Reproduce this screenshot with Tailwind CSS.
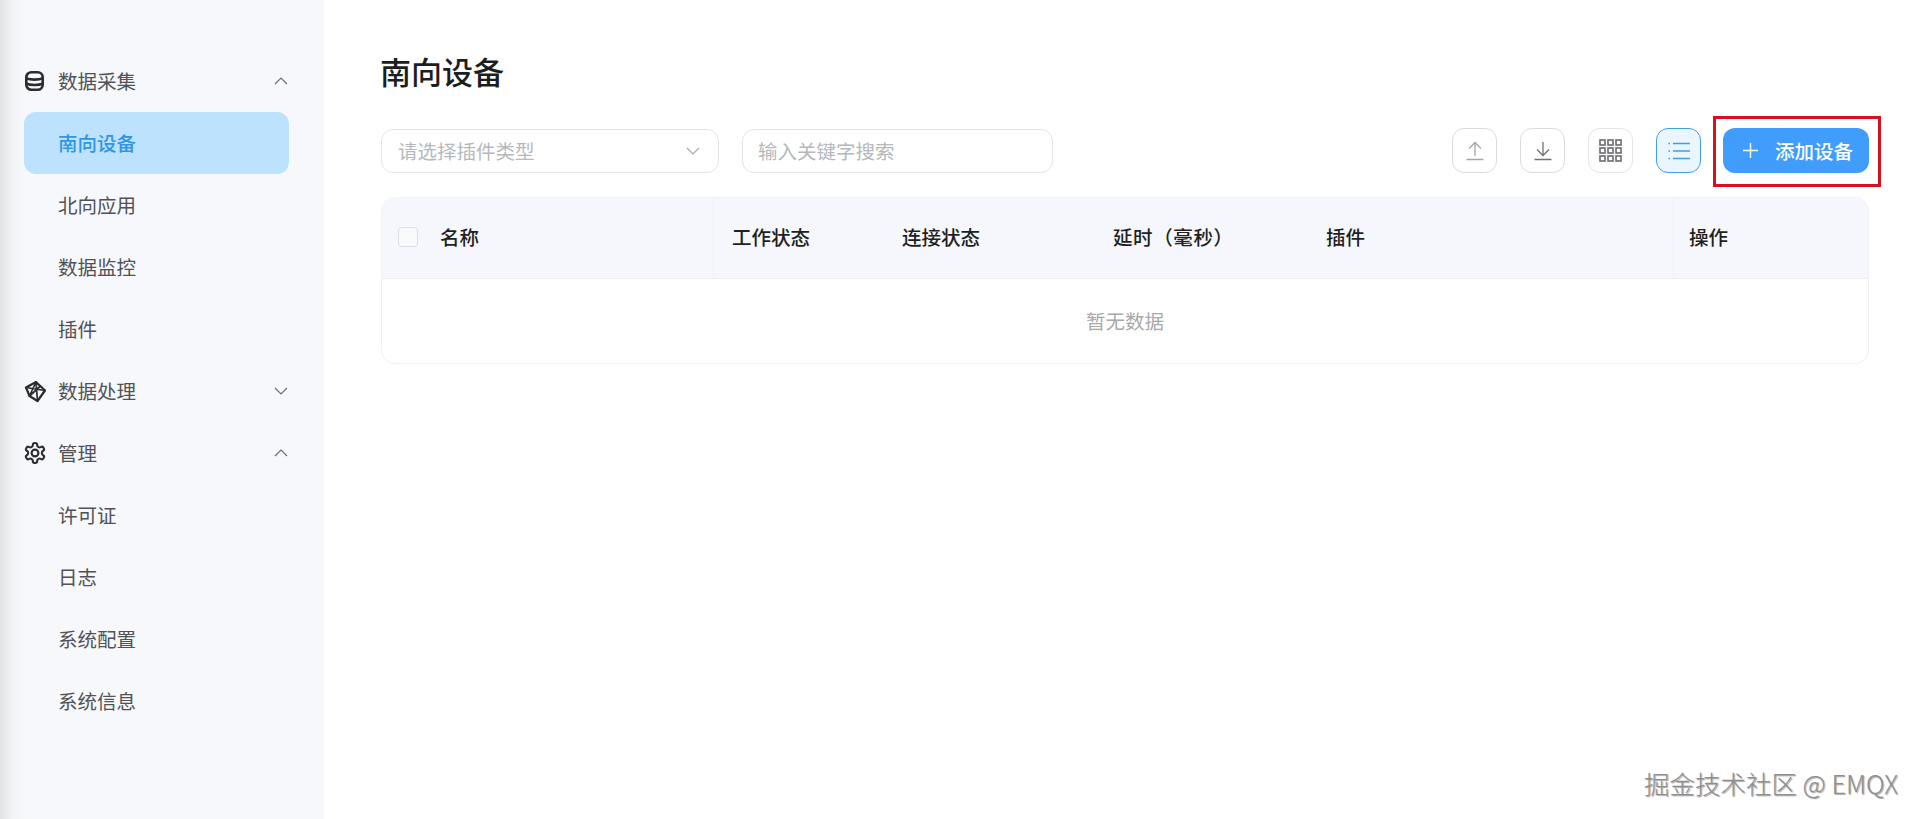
<!DOCTYPE html>
<html lang="zh">
<head>
<meta charset="utf-8">
<script src="https://cdn.jsdelivr.net/npm/@tailwindcss/browser@4"></script>
<title>南向设备</title>
</head>
<body class="bg-white">
<div class="relative flex h-[819px] w-[1920px] overflow-hidden bg-white font-['Noto_Sans_CJK_SC','Noto_Sans',sans-serif] text-[19.5px] text-[#505256]">
  <aside class="h-full w-[324px] shrink-0 bg-[linear-gradient(90deg,#e2e4e6,#f2f3f5_12px,#f7f8fb_26px)] pt-[50px]">
    <div class="flex h-[62px] items-center pl-[25px] pr-[36px]">
      <svg class="h-[20px] w-[19px]" viewBox="0 0 19 20" fill="none" stroke="#2b2c2f" stroke-width="2.6"><rect x="1.3" y="1.3" width="16.4" height="17.4" rx="5"/><path d="M1.3 7.4c4 1.6 12.4 1.6 16.4 0M1.3 12.8c4 1.6 12.4 1.6 16.4 0"/></svg>
      <span class="ml-[14px] flex-1">数据采集</span>
      <svg class="h-[8px] w-[14px]" viewBox="0 0 14 8" fill="none" stroke="#6b6d70" stroke-width="1.2"><path d="M1 7l6-6 6 6"/></svg>
    </div>
    <div class="flex h-[62px] items-center pl-[24px]">
      <div class="flex h-[62px] w-[265px] items-center rounded-[12px] bg-[#bde2fd] pl-[34px] font-medium text-[#2f95e8]">南向设备</div>
    </div>
    <div class="flex h-[62px] items-center pl-[58px]">北向应用</div>
    <div class="flex h-[62px] items-center pl-[58px]">数据监控</div>
    <div class="flex h-[62px] items-center pl-[58px]">插件</div>
    <div class="flex h-[62px] items-center pl-[24px] pr-[36px]">
      <svg class="h-[23px] w-[23px]" viewBox="0 0 23 23" fill="none" stroke="#2b2c2f" stroke-width="1.7" stroke-linejoin="round" stroke-linecap="round"><path d="M12 2L2 7.5l3.5 8.5 8 5 7.5-10.5z" stroke-width="2.2"/><path d="M12 2L5.5 16M12 2l1.5 19M2 7.5L21 10.500M5.500 16L16 6.500"/></svg>
      <span class="ml-[11px] flex-1">数据处理</span>
      <svg class="h-[8px] w-[14px]" viewBox="0 0 14 8" fill="none" stroke="#6b6d70" stroke-width="1.2"><path d="M1 1l6 6 6-6"/></svg>
    </div>
    <div class="flex h-[62px] items-center pl-[23px] pr-[36px]">
      <svg class="h-[24px] w-[24px]" viewBox="0 0 24 24" fill="none" stroke="#2b2c2f" stroke-width="2.1" stroke-linecap="round" stroke-linejoin="round"><path d="M12.22 2h-.44a2 2 0 0 0-2 2v.18a2 2 0 0 1-1 1.73l-.43.25a2 2 0 0 1-2 0l-.15-.08a2 2 0 0 0-2.73.73l-.22.38a2 2 0 0 0 .73 2.73l.15.1a2 2 0 0 1 1 1.72v.51a2 2 0 0 1-1 1.74l-.15.09a2 2 0 0 0-.73 2.73l.22.38a2 2 0 0 0 2.73.73l.15-.08a2 2 0 0 1 2 0l.43.25a2 2 0 0 1 1 1.73V20a2 2 0 0 0 2 2h.44a2 2 0 0 0 2-2v-.18a2 2 0 0 1 1-1.73l.43-.25a2 2 0 0 1 2 0l.15.08a2 2 0 0 0 2.73-.73l.22-.39a2 2 0 0 0-.73-2.73l-.15-.08a2 2 0 0 1-1-1.74v-.5a2 2 0 0 1 1-1.74l.15-.09a2 2 0 0 0 .73-2.73l-.22-.38a2 2 0 0 0-2.73-.73l-.15.08a2 2 0 0 1-2 0l-.43-.25a2 2 0 0 1-1-1.73V4a2 2 0 0 0-2-2z"/><circle cx="12" cy="12" r="3.4"/></svg>
      <span class="ml-[11px] flex-1">管理</span>
      <svg class="h-[8px] w-[14px]" viewBox="0 0 14 8" fill="none" stroke="#6b6d70" stroke-width="1.2"><path d="M1 7l6-6 6 6"/></svg>
    </div>
    <div class="flex h-[62px] items-center pl-[58px]">许可证</div>
    <div class="flex h-[62px] items-center pl-[58px]">日志</div>
    <div class="flex h-[62px] items-center pl-[58px]">系统配置</div>
    <div class="flex h-[62px] items-center pl-[58px]">系统信息</div>
  </aside>

  <main class="flex-1 pl-[56px] pr-[51px] pt-[49px]">
    <h1 class="h-[44px] text-[31px] leading-[44px] font-medium text-[#1d1e20]">南向设备</h1>
    <div class="mt-[35px] flex h-[45px] items-center pl-px">
      <div class="flex h-[44px] w-[338px] items-center justify-between rounded-[12px] border border-[#e2e4e7] pl-[16px] pr-[18px] text-[#b5b8bc]">
        <span>请选择插件类型</span>
        <svg class="h-[8px] w-[14px]" viewBox="0 0 14 8" fill="none" stroke="#a6a9ad" stroke-width="1.2"><path d="M1 1l6 6 6-6"/></svg>
      </div>
      <div class="ml-[23px] flex h-[44px] w-[311px] items-center rounded-[12px] border border-[#e2e4e7] pl-[15px] text-[#b5b8bc]">输入关键字搜索</div>
      <div class="ml-auto flex items-center gap-[23px]">
        <div class="flex h-[45px] w-[45px] items-center justify-center rounded-[12px] border border-[#d9dbde]">
          <svg class="h-[20px] w-[18px]" viewBox="0 0 18 20" fill="none" stroke="#a3a5a8" stroke-width="1.3"><path d="M9 15V1.5M3 7.5l6-6 6 6M.5 18.5h17"/></svg>
        </div>
        <div class="flex h-[45px] w-[45px] items-center justify-center rounded-[12px] border border-[#d9dbde]">
          <svg class="h-[20px] w-[18px]" viewBox="0 0 18 20" fill="none" stroke="#6f7174" stroke-width="1.3"><path d="M9 1v13.5M3 8.5l6 6 6-6M.5 18.5h17"/></svg>
        </div>
        <div class="flex h-[45px] w-[45px] items-center justify-center rounded-[12px] border border-[#e4e5e8]">
          <svg class="h-[23px] w-[23px]" viewBox="0 0 23 23" fill="none" stroke="#6a6c6f" stroke-width="1.6"><rect x="1" y="1" width="5" height="5"/><rect x="9" y="1" width="5" height="5"/><rect x="17" y="1" width="5" height="5"/><rect x="1" y="9" width="5" height="5"/><rect x="9" y="9" width="5" height="5"/><rect x="17" y="9" width="5" height="5"/><rect x="1" y="17" width="5" height="5"/><rect x="9" y="17" width="5" height="5"/><rect x="17" y="17" width="5" height="5"/></svg>
        </div>
        <div class="flex h-[45px] w-[45px] items-center justify-center rounded-[12px] border border-[#3f9fe6] bg-[#e9f5ff]">
          <svg class="h-[20px] w-[22px]" viewBox="0 0 22 20" fill="none" stroke="#3f9fe6" stroke-width="1.4"><path d="M5 2.5h17M5 10h17M5 17.5h17M.5 2.5h1.5M.5 10h1.5M.5 17.5h1.5"/></svg>
        </div>
      </div>
      <div class="relative ml-[22px] flex h-[45px] w-[146px] items-center rounded-[12px] bg-[#409dfb] pl-[20px] font-medium text-white">
        <svg class="h-[15px] w-[15px]" viewBox="0 0 15 15" fill="none" stroke="#fff" stroke-width="1.4"><path d="M7.5 0v15M0 7.5h15"/></svg>
        <span class="ml-[17px] whitespace-nowrap">添加设备</span>
        <div class="absolute -left-[10px] -top-[12px] h-[71px] w-[168px] border-[3px] border-[#d6101c]"></div>
      </div>
    </div>

    <div class="ml-px mt-[24px] h-[167px] w-[1488px] overflow-hidden rounded-[14px] border border-[#f0f1f4]">
      <div class="grid h-[81px] grid-cols-[332px_170px_172px_270px_347px_1fr] items-center border-b border-[#eceef2] bg-[#f5f7fc] pb-[2px] font-medium text-[#1e1f21]">
        <div class="flex h-full items-center border-r border-[#f0f2f7] pl-[16px]">
          <span class="h-[20px] w-[20px] rounded-[4px] border border-[#dcdee2] bg-[#f8f9fb]"></span>
          <span class="ml-[22px]">名称</span>
        </div>
        <div class="pl-[18px]">工作状态</div>
        <div class="pl-[18px]">连接状态</div>
        <div class="pl-[57px] whitespace-nowrap tracking-[0.6px]">延时（毫秒）</div>
        <div>插件</div>
        <div class="flex h-full items-center border-l border-[#f0f2f7] pl-[15px]">操作</div>
      </div>
      <div class="flex h-[84px] items-center justify-center text-[#a9a9a9]">暂无数据</div>
    </div>
  </main>

  <div class="absolute right-[22px] top-[768px] whitespace-nowrap text-[25.5px] leading-[30px] font-light text-[#8e8e8e] [text-shadow:1px_1px_1px_rgba(0,0,0,0.35)]">掘金技术社区 @ EMQX</div>
</div>
</body>
</html>
